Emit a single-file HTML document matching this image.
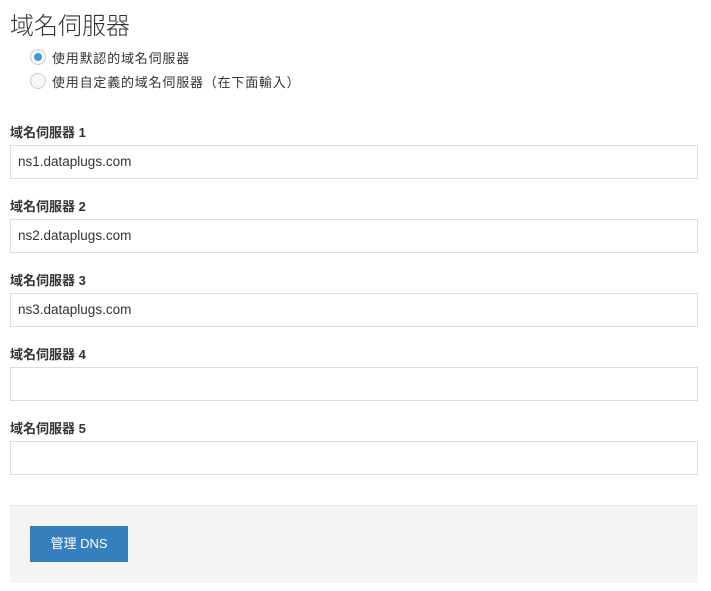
<!DOCTYPE html>
<html><head><meta charset="utf-8"><style>
body{margin:0;background:#fff;font-family:"Liberation Sans","Noto Sans CJK TC",sans-serif;color:#333;}
.t{position:absolute;left:10px;top:6px;font-size:24px;color:#333;font-weight:300;}
.r{position:absolute;left:30px;font-size:13px;color:#333;}
.r i{position:absolute;left:0;top:1px;width:14px;height:14px;border:1px solid #ccc;border-radius:50%;background:#f7f7f7;}
.r i.on b{position:absolute;left:3px;top:3px;width:8px;height:8px;border-radius:50%;background:#3a9bd5;}
.r span{position:absolute;left:22px;top:0;white-space:nowrap;letter-spacing:0.8px;}
.l{position:absolute;left:10px;font-size:13px;font-weight:bold;color:#333;}
.in{position:absolute;left:10px;width:686px;height:32px;border:1px solid #ddd;font-size:13.5px;line-height:32px;box-sizing:content-box;}
.in span{padding-left:7px;}
.f{position:absolute;left:10px;top:505px;width:688px;height:77px;background:#f4f4f4;border-top:1px solid #e3e3e3;}
.btn{position:absolute;left:20px;top:20px;width:98px;height:36px;background:#357fbd;color:#fff;font-size:13px;line-height:36px;text-align:center;}
</style></head><body>
<div class="t">域名伺服器</div>
<div class="r" style="top:48px"><i class="on"><b></b></i><span>使用默認的域名伺服器</span></div>
<div class="r" style="top:72px"><i></i><span>使用自定義的域名伺服器（在下面輸入）</span></div>
<div class="l" style="top:122px">域名伺服器 1</div>
<div class="in" style="top:145px"><span>ns1.dataplugs.com</span></div>
<div class="l" style="top:196px">域名伺服器 2</div>
<div class="in" style="top:219px"><span>ns2.dataplugs.com</span></div>
<div class="l" style="top:270px">域名伺服器 3</div>
<div class="in" style="top:293px"><span>ns3.dataplugs.com</span></div>
<div class="l" style="top:344px">域名伺服器 4</div>
<div class="in" style="top:367px"></div>
<div class="l" style="top:418px">域名伺服器 5</div>
<div class="in" style="top:441px"></div>
<div class="f"><div class="btn">管理 DNS</div></div>
</body></html>
